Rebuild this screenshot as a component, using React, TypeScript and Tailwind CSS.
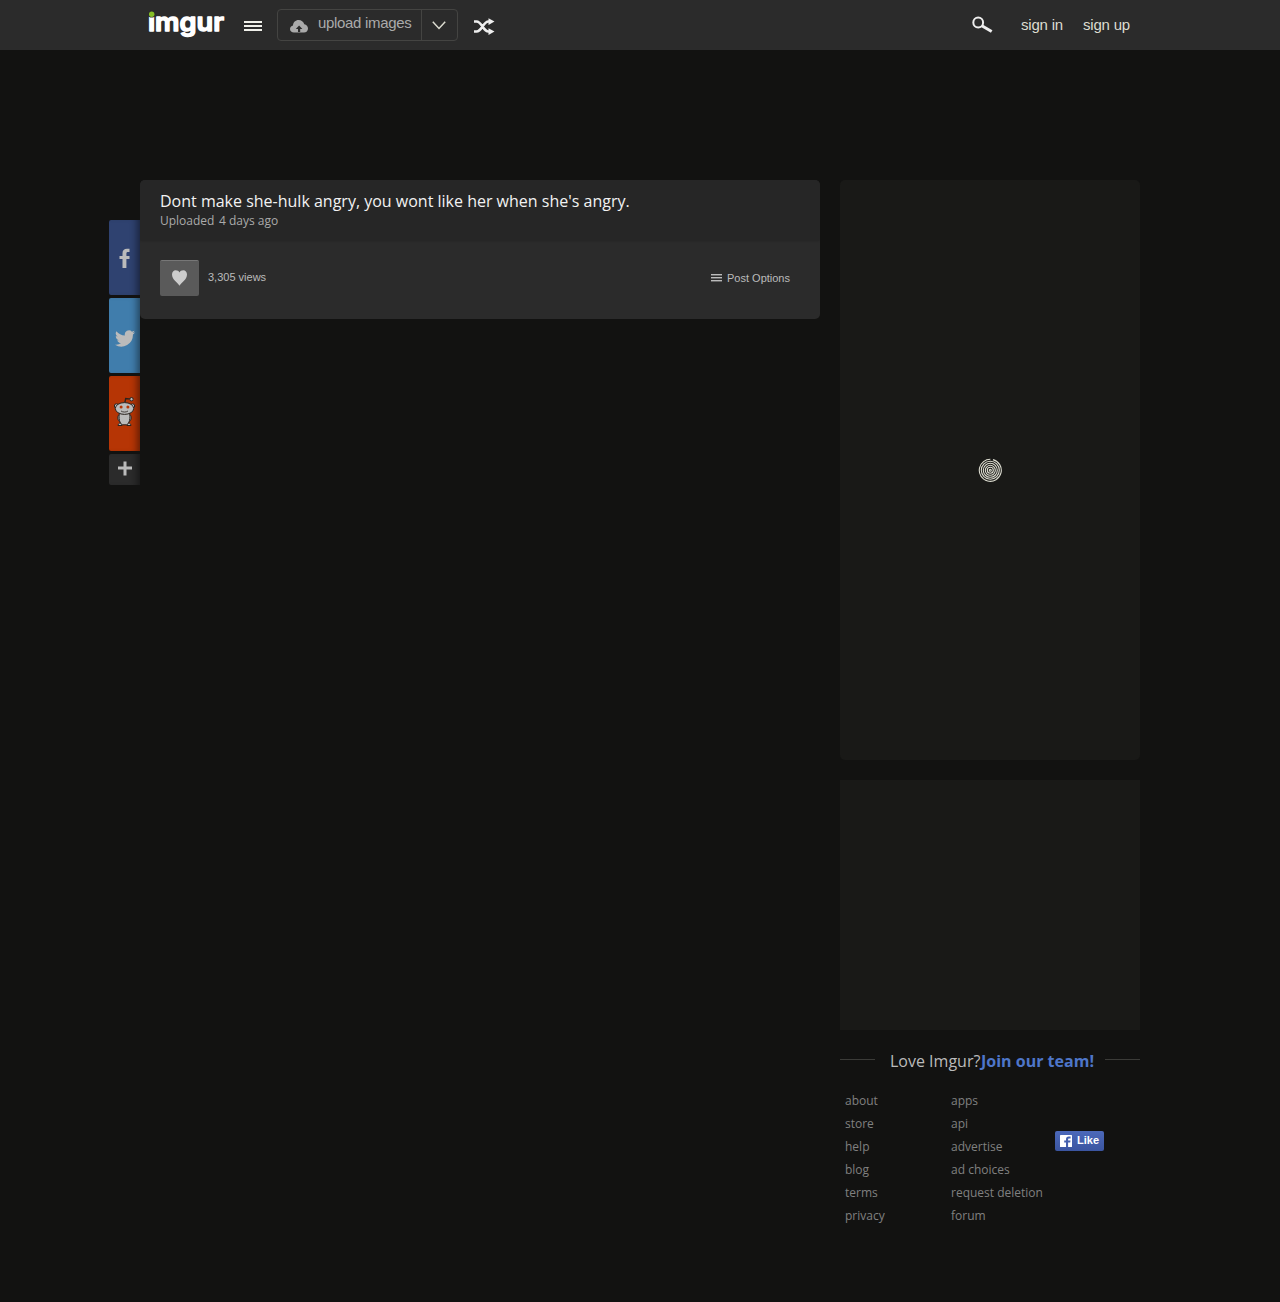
import React from "react";

const SANS = "font-['Liberation_Sans',Arial,sans-serif]";

function Logo() {
  return (
    <svg width="82" height="40" viewBox="0 0 82 40" className="block shrink-0" role="img" aria-label="imgur">
      <text
        x="3"
        y="26.4"
        textLength="76"
        lengthAdjust="spacingAndGlyphs"
        fontFamily="Inter, sans-serif"
        fontWeight="600"
        fontSize="25.5"
        fill="#fff"
        stroke="#fff"
        strokeWidth="1.4"
        strokeLinejoin="round"
      >
        imgur
      </text>
      <rect x="2" y="2" width="9" height="9.3" fill="#2b2b2b" />
      <circle cx="6.700" cy="9.200" r="3.400" fill="#2b2b2b" />
      <circle cx="6.700" cy="9.200" r="2.700" fill="#85bf25" />
    </svg>
  );
}

function Bars({ className }: { className: string }) {
  return (
    <div className={"flex shrink-0 flex-col " + className}>
      <i className="h-[2px] bg-[#f0f0ea]" />
      <i className="h-[2px] bg-[#f0f0ea]" />
      <i className="h-[2px] bg-[#f0f0ea]" />
    </div>
  );
}

function Header() {
  return (
    <header className={"h-[50px] bg-[#2b2b2b] " + SANS}>
      <div className="mx-auto flex h-[50px] w-[1000px] items-start">
        <div className="ml-[5px] mt-[5px]">
          <Logo />
        </div>
        <Bars className="ml-[17px] mt-[21px] w-[18px] gap-[2px]" />
        <div className="ml-[15px] mt-[9px] flex h-[32px] w-[181px] rounded-[4px] border border-[#444442]">
          <div className="flex w-[144px] items-start border-r border-[#444442]">
            <svg width="18" height="13" viewBox="0 0 18 13" className="ml-[12px] mt-[10px] block shrink-0">
              <path
                fill="#aaa"
                fillRule="evenodd"
                d="M4 12.6C1.7 12.6 0 11 0 9c0-1.900 1.300-3.200 3-3.500C3.200 2.300 5.500 0 8.600 0c2.700 0 5 1.700 5.700 4.300C16.500 4.600 18 6.300 18 8.500c0 2.300-1.700 4.100-4 4.100zM8 12h2.200V9h2.200L9.100 5.400 5.800 9H8z"
              />
            </svg>
            <span className="ml-[10px] mt-[4px] whitespace-nowrap text-[15px] leading-[18px] tracking-[-0.32px] text-[#aaa]">upload images</span>
          </div>
          <svg width="14" height="9" viewBox="0 0 14 9" className="ml-[10px] mt-[11px] block">
            <path d="M.8.8 7 7.400 13.200.8" fill="none" stroke="#ddddd1" strokeWidth="1.5" />
          </svg>
        </div>
        <svg width="21" height="17" viewBox="0 0 21 17" className="ml-[16px] mt-[18px] block" fill="none" stroke="#eee" strokeWidth="2.600">
          <path d="M0 3.500h2.500c5.500 0 6.500 10 12 10H16M0 13.500h2.500c5.500 0 6.500-10 12-10H16" />
          <path d="M14.500.2 20.500 3.500l-6 3.400zM14.500 10.200l6 3.300-6 3.500z" fill="#eee" stroke="none" />
        </svg>
        <svg width="21" height="18" viewBox="0 0 21 18" className="ml-auto mr-[28px] mt-[16px] block" fill="none" stroke="#eee">
          <circle cx="6.200" cy="6.500" r="4.900" strokeWidth="2" />
          <path d="M9.800 9.700 19.700 15.500" strokeWidth="3" />
        </svg>
        <a className="mt-[16px] w-[42px] whitespace-nowrap text-[15px] leading-[18px] tracking-[-0.2px] text-[#ddddd1]">sign in</a>
        <a className="ml-[20px] mr-[10px] mt-[16px] w-[47px] whitespace-nowrap text-[15px] leading-[18px] tracking-[-0.2px] text-[#ddddd1]">sign up</a>
      </div>
    </header>
  );
}

function ShareBar() {
  const tile = "flex justify-center rounded-l-[2px] shadow-[inset_-8px_0_7px_-5px_rgba(0,0,0,0.45)] ";
  return (
    <div className="-ml-[31px] mt-[40px] flex w-[31px] shrink-0 flex-col gap-[3px]">
      <div className={tile + "h-[75px] bg-[#2f4270]"}>
        <svg width="11" height="20" viewBox="0 0 11 20" className="mt-[28px] block">
          <path fill="#bbb" d="M3.500 20v-9H.5V8h3V5.200c0-3 1.600-4.500 4.500-4.500H10.500V4H9C7.800 4 7.400 4.500 7.400 5.500V8h3.100v3H7.400v9z" />
        </svg>
      </div>
      <div className={tile + "h-[75px] bg-[#407dac]"}>
        <svg width="20" height="17" viewBox="0 2 24 20" className="mt-[32px] block">
          <path
            fill="#bbb"
            d="M24 4.600a10 10 0 0 1-2.800.8 5 5 0 0 0 2.200-2.700 10 10 0 0 1-3.100 1.200 4.900 4.900 0 0 0-8.400 4.500A14 14 0 0 1 1.700 3.200a4.900 4.900 0 0 0 1.500 6.500 5 5 0 0 1-2.200-.6 4.900 4.900 0 0 0 3.900 4.900 5 5 0 0 1-2.200.1 4.900 4.900 0 0 0 4.600 3.400A9.900 9.900 0 0 1 0 19.500a14 14 0 0 0 21.500-12.400A10 10 0 0 0 24 4.600z"
          />
        </svg>
      </div>
      <div className={tile + "h-[75px] bg-[#b63505]"}>
        <svg width="22" height="30" viewBox="0 0 22 30" className="mt-[21px] block" stroke="#29221e" strokeWidth="1" fill="#bbb">
          <g transform="translate(-.5 0)">
            <path d="M11 7 12.200 1.500 17 2.200" fill="none" strokeWidth="1.300" />
            <circle cx="18" cy="2.200" r="1.700" />
            <circle cx="3" cy="9" r="2.200" />
            <circle cx="19" cy="9" r="2.200" />
            <path d="M6.500 17C3.200 18.500 4 23.500 6.500 25M15.500 17C18.800 18.500 18 23.500 15.500 25" />
            <path d="M4.500 28.500c0-2 2-3 4-2.500v2.500zM17.500 28.500c0-2-2-3-4-2.500v2.500z" />
            <path d="M6 16h10c1.200 5-.2 10.500-2.700 11.800H8.700C6.200 26.500 4.800 21 6 16z" />
            <ellipse cx="11" cy="11.500" rx="9.200" ry="5.900" />
            <g stroke="none" fill="#b63505">
              <circle cx="7.600" cy="10" r="1.500" />
              <circle cx="14.400" cy="10" r="1.500" />
            </g>
            <path d="M7.500 14c2 1.400 5 1.400 7 0" fill="none" strokeWidth=".8" />
          </g>
        </svg>
      </div>
      <div className={tile + "h-[31px] bg-[#2b2b2b]"}>
        <svg width="14" height="15" viewBox="0 0 14 15" className="ml-[1px] mt-[7px] block">
          <path d="M7 .5v14M0 7h14" stroke="#bbb" strokeWidth="3" />
        </svg>
      </div>
    </div>
  );
}

function Post() {
  return (
    <section className="h-[139px] w-[680px] shrink-0 overflow-hidden rounded-[5px] bg-[#2b2b2b]">
      <div className="h-[60px] bg-[#262626] pl-[20px] pt-[10px] shadow-[0_0_3px_rgba(0,0,0,0.3)]">
        <h1 className="text-[16px] leading-[22px] text-[#f2f2f2]">Dont make she-hulk angry, you wont like her when she's angry.</h1>
        <p className="flex gap-[4.5px] text-[12px] leading-[18px] text-[#aaa]">
          <span>Uploaded</span>
          <span>4 days ago</span>
        </p>
      </div>
      <div className={"flex pl-[20px] pr-[30px] pt-[20px] text-[11px] leading-[14px] text-[#bbb] " + SANS}>
        <div className="flex h-[36px] w-[39px] justify-center rounded-[2px] border-t border-[#777] bg-[#5a5a5a]">
          <svg width="15" height="16" viewBox="0 0 15 16" className="mt-[9px] block">
            <path fill="#ccc" d="M7.500 15.800C5.500 12.500 0 9.500 0 4.500 0 1.800 1.600.2 3.700.2 5.400.2 6.900 1 7.500 2.600 8.100 1 9.600.2 11.300.2 13.400.2 15 1.800 15 4.500c0 5-5.500 8-7.500 11.300z" />
          </svg>
        </div>
        <span className="ml-[9px] mt-[10px]">3,305 views</span>
        <svg width="11" height="8" viewBox="0 0 11 8" className="ml-auto mr-[5px] mt-[14px] block">
          <path d="M0 .5h11M0 3.500h11M0 6.500h11" stroke="#bbb" />
          <path d="M0 1.500h11M0 4.500h11M0 7.500h11" stroke="#666" />
        </svg>
        <span className="mt-[11px]">Post Options</span>
      </div>
    </section>
  );
}

const LINKS = [
  ["about", "store", "help", "blog", "terms", "privacy"],
  ["apps", "api", "advertise", "ad choices", "request deletion", "forum"],
];

function Sidebar() {
  return (
    <aside className="ml-[20px] w-[300px] shrink-0">
      <div className="flex h-[580px] items-center justify-center rounded-[5px] bg-[#191917]">
        <svg width="24" height="24" viewBox="-.3 -.3 24 24" fill="none" stroke="#ddddd1" strokeWidth="1.1" className="block">
          <circle cx="12" cy="12" r="11" strokeDasharray="66 3.100" transform="rotate(-76 12 12)" />
          <circle cx="12" cy="12" r="9" />
          <circle cx="12" cy="12" r="7" />
          <circle cx="12" cy="12" r="5" />
          <circle cx="12" cy="12" r="3" />
          <circle cx="12" cy="12" r="1" />
        </svg>
      </div>
      <div className="mt-[20px] h-[250px] bg-[#191917]" />
      <div className="mt-[20px] flex h-[22px] items-start whitespace-nowrap text-[16px] leading-[22px]">
        <i className="mt-[9px] h-px w-[35px] bg-[#3b3b38]" />
        <span className="ml-[15px] w-[91px] text-[#bbb]">Love Imgur?</span>
        <b className="font-bold text-[#4e76c9]">Join our team!</b>
        <i className="ml-auto mt-[9px] h-px w-[35px] bg-[#3b3b38]" />
      </div>
      <div className="mt-[17px] flex pl-[5px]">
        <ul className="w-[106px] text-[12px] leading-[23px] text-[#808080]">
          {LINKS[0].map((t) => <li key={t}>{t}</li>)}
        </ul>
        <ul className="w-[104px] text-[12px] leading-[23px] text-[#808080]">
          {LINKS[1].map((t) => <li key={t}>{t}</li>)}
        </ul>
        <div className={"mt-[42px] flex h-[20px] w-[49px] rounded-[2px] bg-linear-to-b from-[#4c69ba] to-[#3b55a0] text-[11px] font-bold leading-[18px] text-white " + SANS}>
          <svg width="12" height="12" viewBox="0 0 12 12" className="ml-[5px] mt-[4px] block">
            <rect width="12" height="12" rx=".6" fill="#fff" />
            <path fill="#4460ae" d="M6 12V7.600H4.200V5.600H6V4.300C6 2.500 7 1.600 8.700 1.600h1.900v2H9.200c-.8 0-1.100.3-1.100 1v1h2.400l-.3 2H8.100V12z" />
          </svg>
          <span className="ml-[5px]">Like</span>
        </div>
      </div>
    </aside>
  );
}

export default function App() {
  return (
    <div className="min-h-[1302px] w-full bg-[#121211] font-['Open_Sans',sans-serif]">
      <Header />
      <main className="mx-auto mt-[130px] flex w-[1000px] items-start">
        <ShareBar />
        <Post />
        <Sidebar />
      </main>
    </div>
  );
}
